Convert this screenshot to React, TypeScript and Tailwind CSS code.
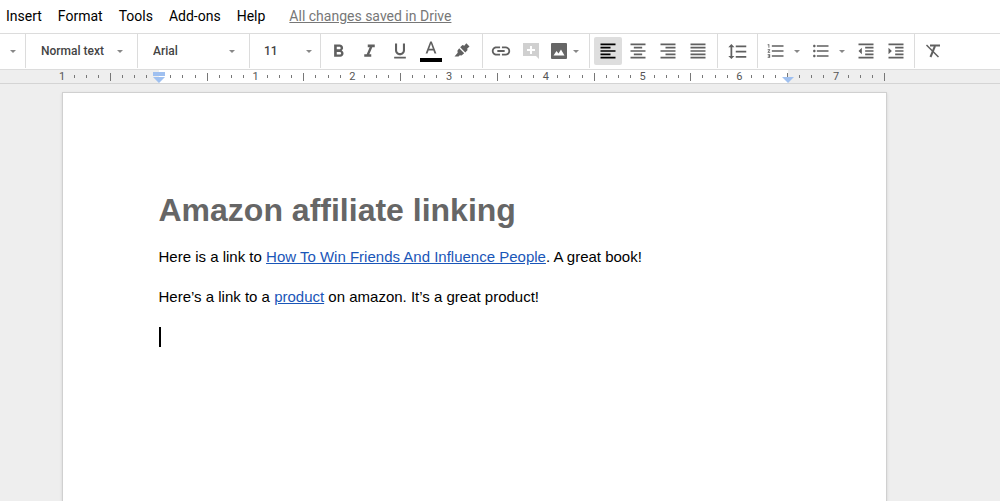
import React from 'react'
import {
  MdFormatAlignCenter,
  MdFormatAlignJustify,
  MdFormatAlignLeft,
  MdFormatAlignRight,
  MdFormatBold,
  MdFormatIndentDecrease,
  MdFormatIndentIncrease,
  MdFormatItalic,
  MdFormatLineSpacing,
  MdFormatListBulleted,
  MdFormatListNumbered,
  MdFormatUnderlined,
  MdInsertLink,
} from 'react-icons/md'

const menus = ['Insert', 'Format', 'Tools', 'Add-ons', 'Help']

const Arrow = () => (
  <svg className="pointer-events-none shrink-0 text-[#888]" width="6" height="3" viewBox="0 0 6 3">
    <path d="M0 0h6L3 3z" fill="currentColor" />
  </svg>
)

const Group = ({ className = '', children }: { className?: string; children: React.ReactNode }) => (
  <div className={`flex h-full shrink-0 items-center border-r border-[#dcdcdc] ${className}`}>{children}</div>
)

const Tool = ({ label, active = false, children }: { label: string; active?: boolean; children: React.ReactNode }) => (
  <button
    type="button"
    aria-label={label}
    className={`flex h-7 w-7 shrink-0 items-center justify-center rounded-xs ${active ? 'bg-[#dedede] text-black' : 'text-[#606060]'}`}
  >
    {children}
  </button>
)

const Picker = ({ label, options }: { label: string; options: string[] }) => (
  <div className="flex w-full items-center">
    <select
      aria-label={label}
      className="min-w-0 flex-1 appearance-none bg-transparent font-medium text-[#444] outline-none"
    >
      {options.map((option) => (
        <option key={option}>{option}</option>
      ))}
    </select>
    <Arrow />
  </div>
)

const Toolbar = () => (
  <div role="toolbar" className="flex h-[37px] items-center overflow-hidden border-y border-[#dcdcdc] bg-white pb-px text-xs">
    <Group className="w-[26px]">
      <button type="button" aria-label="Zoom" className="flex h-7 w-full items-center justify-center">
        <Arrow />
      </button>
    </Group>
    <Group className="w-28 pr-3.5 pl-[15px]">
      <Picker label="Styles" options={['Normal text', 'Title', 'Heading 1', 'Heading 2']} />
    </Group>
    <Group className="w-28 pr-3.5 pl-[15px]">
      <Picker label="Font" options={['Arial', 'Georgia', 'Verdana']} />
    </Group>
    <Group className="w-[71px] pr-2 pl-3.5">
      <Picker label="Font size" options={['11', '12', '14', '18']} />
    </Group>
    <Group className="w-[162px] gap-[3px] pl-[3px]">
      <Tool label="Bold">
        <MdFormatBold size={21} />
      </Tool>
      <Tool label="Italic">
        <MdFormatItalic size={21} />
      </Tool>
      <Tool label="Underline">
        <MdFormatUnderlined size={20} />
      </Tool>
      <Tool label="Text color">
        <svg width="24" height="24" viewBox="0 0 24 24" fill="currentColor">
          <path d="M11.200 2.500h1.600l4.600 12h-1.900l-1.100-3.100H9.600L8.500 14.500H6.600zM10.200 9.800h3.600L12 4.800z" />
          <path d="M1 19h22v4H1z" fill="#000" />
        </svg>
      </Tool>
      <Tool label="Highlight color">
        <svg width="20" height="20" viewBox="0 0 20 20" fill="currentColor">
          <path d="M7.200 7.300l5 5-2.700 2.200-1.700-.3L6.500 15.500H2.500l3.200-3.800-.3-1.900z" />
          <path d="M8.200 6.300L10.500 4l1.800.7L14.300 2.200 17.500 5.400l-2.400 2.300.5 1.400-2.300 2.300z" />
        </svg>
      </Tool>
    </Group>
    <Group className="w-[107px] gap-0.5 pl-1">
      <Tool label="Insert link">
        <MdInsertLink size={22} />
      </Tool>
      <Tool label="Add comment">
        <svg width="16" height="16" viewBox="0 0 16 16">
          <path d="M0 0h16v16l-3-3H0z" fill="#d0d0d0" />
          <path d="M7 3h2v3h3v2H9v3H7V8H4V6h3z" fill="#fff" />
        </svg>
      </Tool>
      <button type="button" aria-label="Insert image" className="flex h-7 items-center gap-1.5 px-1 text-[#666]">
        <svg width="16" height="16" viewBox="0 0 16 16">
          <rect width="16" height="16" rx="1" fill="currentColor" />
          <path d="M2.500 12.500l3-4.500 2 2.500 2.500-4 3.500 6z" fill="#fff" />
        </svg>
        <Arrow />
      </button>
    </Group>
    <Group className="w-32 gap-0.5 pl-1">
      <Tool label="Left align" active>
        <MdFormatAlignLeft size={20} />
      </Tool>
      <Tool label="Center align">
        <MdFormatAlignCenter size={20} />
      </Tool>
      <Tool label="Right align">
        <MdFormatAlignRight size={20} />
      </Tool>
      <Tool label="Justify">
        <MdFormatAlignJustify size={20} />
      </Tool>
    </Group>
    <Group className="w-10 justify-center">
      <Tool label="Line spacing">
        <MdFormatLineSpacing size={21} />
      </Tool>
    </Group>
    <Group className="w-[157px] gap-0.5 pl-1">
      <button type="button" aria-label="Numbered list" className="flex h-7 w-[43px] items-center gap-2 pl-1 text-[#606060]">
        <MdFormatListNumbered size={20} />
        <Arrow />
      </button>
      <button type="button" aria-label="Bulleted list" className="flex h-7 w-[43px] items-center gap-2 pl-1 text-[#606060]">
        <MdFormatListBulleted size={20} />
        <Arrow />
      </button>
      <Tool label="Decrease indent">
        <MdFormatIndentDecrease size={20} />
      </Tool>
      <Tool label="Increase indent">
        <MdFormatIndentIncrease size={20} />
      </Tool>
    </Group>
    <div className="pl-1">
      <Tool label="Clear formatting">
        <svg width="16" height="16" viewBox="0 0 16 16" fill="none" stroke="currentColor">
          <path d="M5 2.500H15" strokeWidth="2" />
          <path d="M10 3L5.500 14" strokeWidth="2" />
          <path d="M1.500 2L13.500 14" strokeWidth="1.500" />
        </svg>
      </Tool>
    </div>
  </div>
)

// One mark for each eighth of an inch, over 8.5 inches
const Ruler = () => (
  <div className="h-[14px] border-b border-[#d4d4d4] pr-[53px]">
    <div className="relative mx-auto h-full max-w-[823px]">
      <div className="absolute inset-y-0 right-[97px] left-[97px] bg-white" />
      <div className="relative flex h-full items-center justify-between text-[11px] leading-3 text-[#555]">
        {Array.from({ length: 69 }, (_, i) => (
          <div key={i} className="relative flex h-full w-0 items-center justify-center">
            {i % 8 === 0 && i !== 8 && <span>{Math.abs(i / 8 - 1)}</span>}
            {i % 8 === 4 && <span className="h-2 w-px shrink-0 bg-[#777]" />}
            {i % 4 !== 0 && <span className="h-[3px] w-px shrink-0 bg-[#777]" />}
            {i === 8 && (
              <svg className="absolute top-0.5" width="12" height="11" viewBox="0 0 12 11" fill="#9fc0f0">
                <path d="M0 0h12v4H0zM0 5h12L6 11z" />
              </svg>
            )}
            {i === 60 && (
              <svg className="absolute top-[7px]" width="12" height="6" viewBox="0 0 12 6" fill="#9fc0f0">
                <path d="M0 0h12L6 6z" />
              </svg>
            )}
          </div>
        ))}
      </div>
    </div>
  </div>
)

const App = () => {
  return (
    <div className="flex min-h-screen flex-col bg-[#eee] font-['Roboto',sans-serif]">
      <nav className="flex h-[33px] items-center gap-4 bg-white pb-0.5 pl-1.5 text-sm text-black">
        {menus.map((menu) => (
          <button key={menu} type="button" className="shrink-0">
            {menu}
          </button>
        ))}
        <a href="#saved" className="shrink-0 pl-2 text-[#777] underline">
          All changes saved in Drive
        </a>
      </nav>
      <Toolbar />
      <Ruler />
      <main className="flex flex-1 flex-col pt-2 pr-[52px]">
        <article className="mx-auto w-full max-w-[825px] flex-1 border border-b-0 border-[#d0d0d0] bg-white px-24 pt-[97px] font-['Liberation_Sans',Arial,sans-serif] text-[15px] leading-5 text-black shadow-sm">
          <h1 className="text-[32px] leading-10 font-bold text-[#666]">Amazon affiliate linking</h1>
          <p className="mt-[17px]">
            Here is a link to{' '}
            <a href="#book" className="text-[#1a56b8] underline">
              How To Win Friends And Influence People
            </a>
            . A great book!
          </p>
          <p className="mt-5">
            Here’s a link to a{' '}
            <a href="#product" className="text-[#1a56b8] underline">
              product
            </a>{' '}
            on amazon. It’s a great product!
          </p>
          <div className="mt-5 h-5 w-0.5 bg-black" />
        </article>
      </main>
    </div>
  )
}

export default App
